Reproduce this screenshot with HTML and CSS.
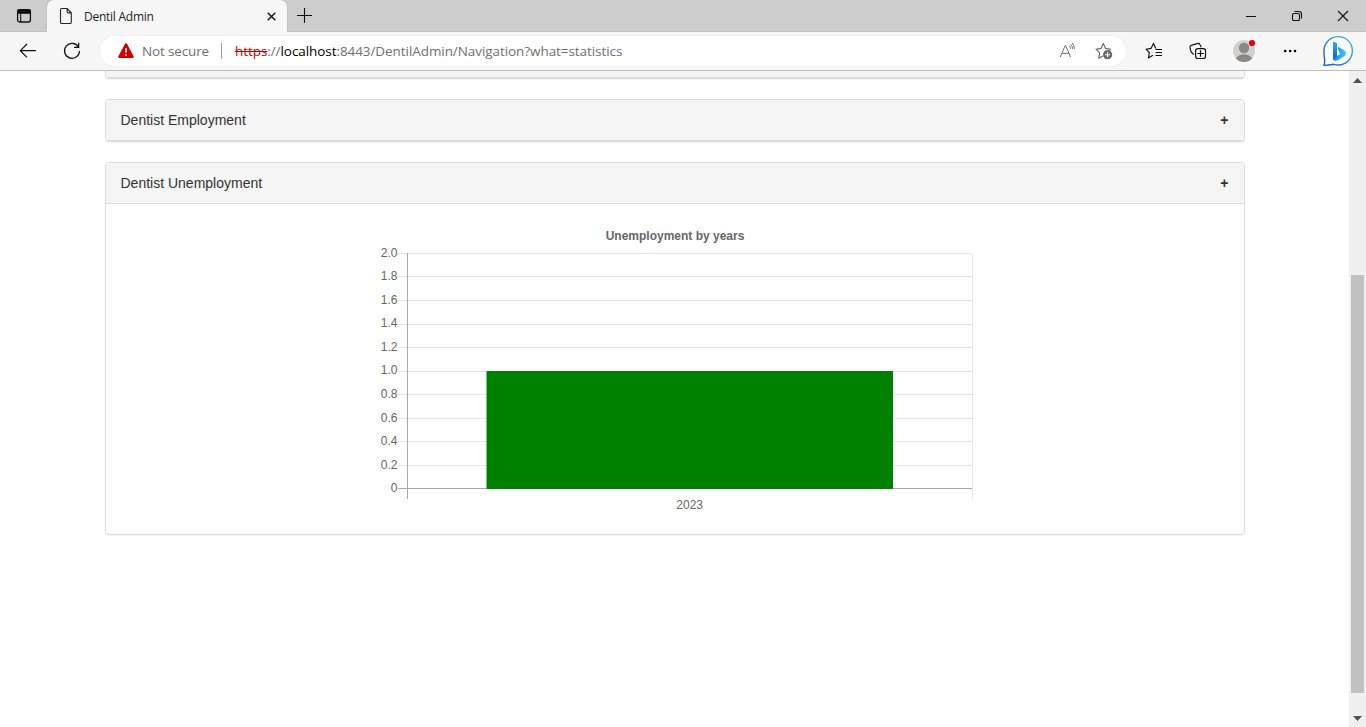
FILE: index.html
```html
<!DOCTYPE html>
<html lang="en">
<head>
<meta charset="utf-8">
<title>Dentil Admin</title>
<link rel="stylesheet" href="styles.css">
</head>
<body>
<div class="browser">
  <div class="tabbar">
    <div class="tab-menu"><svg width="16" height="16" viewBox="0 0 16 16"><rect x="1.6" y="1.6" width="12.8" height="12.4" rx="2" fill="none" stroke="#111" stroke-width="1.3"/><path d="M2 2h12v3.2H2zM4.7 5v9" fill="#111" stroke="#111" stroke-width="1.1"/></svg></div>
    <div class="tab">
      <svg width="14" height="18" viewBox="0 0 14 18"><path d="M2.7 1.5h5.5l4.1 4.3v9.4q0 1.3-1.3 1.3H2.7q-1.2 0-1.2-1.3V2.8q0-1.3 1.2-1.3zM8.2 1.7v3q0 1.2 1.2 1.2h2.8" fill="none" stroke="#222" stroke-width="1.1"/></svg>
      <span class="tab-title">Dentil Admin</span>
      <svg width="9" height="9" viewBox="0 0 9 9"><path d="M.7.7l7.6 7.6M8.3.7L.7 8.3" stroke="#111" stroke-width="1.4"/></svg>
    </div>
    <div class="new-tab"><svg width="15" height="15" viewBox="0 0 15 15"><path d="M7.5 0v15M0 7.5h15" stroke="#111" stroke-width="1.1"/></svg></div>
    <div class="window-buttons">
      <svg width="12" height="12" viewBox="0 0 12 12"><path d="M1 6.5h10" stroke="#111"/></svg>
      <svg width="12" height="12" viewBox="0 0 12 12"><rect x="1.5" y="3.5" width="7" height="7" rx="1.3" fill="none" stroke="#111" stroke-width="1.1"/><path d="M3.5 1.5H8q2.5 0 2.5 2.5v4.5" fill="none" stroke="#111" stroke-width="1.1"/></svg>
      <svg width="12" height="12" viewBox="0 0 12 12"><path d="M1 1l10 10M11 1L1 11" stroke="#111" stroke-width="1.1"/></svg>
    </div>
  </div>
  <div class="toolbar">
    <svg class="back" width="18" height="16" viewBox="0 0 18 16"><path d="M8 1L1.3 7.7 8 14.4M1.5 7.7H17" fill="none" stroke="#111" stroke-width="1.2"/></svg>
    <svg class="reload" width="18" height="18" viewBox="0 0 18 18"><path d="M15.4 4.9A7.5 7.5 0 1 0 16.5 9M15.7.8v4.5h-4.6" fill="none" stroke="#111" stroke-width="1.2"/></svg>
    <div class="address">
      <svg class="warning" width="18" height="16" viewBox="0 0 18 16"><path d="M7.8 1.2q1.2-1.7 2.4 0l6.3 11.9q.8 1.9-1.1 1.9H2.6q-1.9 0-1.1-1.9z" fill="#c00"/><path d="M9 5v4.8M9 11.3v1.6" stroke="#fff" stroke-width="1.4"/></svg>
      <span class="security">Not secure</span>
      <span class="divider"></span>
      <span class="url"><s>https</s>://<b>localhost</b>:8443/DentilAdmin/Navigation?what=statistics</span>
      <svg class="read" width="18" height="18" viewBox="0 0 18 18"><path d="M1.3 15L6.3 3.3h.3L11.5 15M3 11.4h6.8M10 3.6q1.6 1.3 1.6 3.2M11.6 2.2q2 1.8 2 4.7M13.2 1q2.2 2.3 2.2 6" fill="none" stroke="#707070" stroke-width="1"/></svg>
      <svg class="favorite" width="18" height="18" viewBox="0 0 18 18"><path d="M7.8 14l-4 2.2.8-5.3L1 7.2l5-.8 2.3-4.9 2.3 4.9 5.1.8-1.4 1.5" fill="none" stroke="#666" stroke-width="1.1" stroke-linejoin="round"/><circle cx="12.6" cy="12.7" r="4.6" fill="#686868"/><path d="M12.6 10.2v5M10.1 12.7h5" stroke="#fff" stroke-width="1.1"/></svg>
    </div>
    <div class="actions">
      <svg width="18" height="18" viewBox="0 0 18 18"><path d="M7.9 13.3l-4.5 2.7.9-5.3L1 7.2l5-.8 2.5-5 2.3 5.1" fill="none" stroke="#111" stroke-width="1.15" stroke-linejoin="round"/><path d="M10.5 7.5H17M10.5 10.5H17M10.5 13.5H17" stroke="#111" stroke-width="1.15"/></svg>
      <svg width="18" height="18" viewBox="0 0 18 18"><path d="M4.8 12.6L2.7 10.5Q1.9 9.6 1.6 8.4L1 5.2q-.2-1.4 1.2-1.8l6.7-2q1.4-.3 2 1l1.4 2.8" fill="none" stroke="#111" stroke-width="1.15"/><rect x="6.6" y="6.6" width="9.9" height="9.9" rx="2.2" fill="#f7f7f7" stroke="#111" stroke-width="1.2"/><path d="M11.5 8.3v6.4M8.3 11.5h6.5" stroke="#111" stroke-width="1.2"/></svg>
      <svg width="24" height="24" viewBox="0 0 24 24"><defs><clipPath id="avatar"><circle cx="12" cy="12" r="11"/></clipPath></defs><circle cx="12" cy="12" r="11" fill="#d2d0ce"/><g clip-path="url(#avatar)" fill="#8a8683"><circle cx="12" cy="9" r="5.2"/><ellipse cx="12" cy="21.5" rx="8.5" ry="6.2"/></g><circle cx="20" cy="4" r="3.1" fill="#e60000"/></svg>
      <svg width="18" height="18" viewBox="0 0 18 18"><circle cx="4.2" cy="9" r="1.3"/><circle cx="9.1" cy="9" r="1.3"/><circle cx="14" cy="9" r="1.3"/></svg>
      <svg class="bing" width="34" height="34" viewBox="0 0 34 34"><defs><linearGradient id="ring" x1="1" y1="0" x2="0" y2="1"><stop stop-color="#36c5ef"/><stop offset=".5" stop-color="#2487e8"/><stop offset="1" stop-color="#2250cf"/></linearGradient><linearGradient id="stem" x1="0" y1="0" x2="0" y2="1"><stop stop-color="#24aef5"/><stop offset="1" stop-color="#1b4fd9"/></linearGradient><linearGradient id="bowl"><stop stop-color="#1c75e5"/><stop offset="1" stop-color="#39d4ed"/></linearGradient></defs><path d="M3 31.4q.9-2.4.7-5.6Q3 22 3 17.5A14.2 14.2 0 1 1 17.2 31q-2.6 0-4.7-.7Q8 31.2 3 31.4z" fill="#fff" stroke="url(#ring)" stroke-width="1.4" stroke-linejoin="round"/><path d="M12 7.5l3.4 1.3q.6.3.6 1v13.7l-4 2.5z" fill="url(#stem)"/><path d="M17 12.7l6 3.2q2 1.2 2 3.4 0 2.2-2 3.3l-6.5 3.7q-2.3 1.2-4.5-.5v-1.4l7-4.3-2-5z" fill="url(#bowl)"/></svg>
    </div>
  </div>
  <div class="viewport">
    <main class="page">
      <section class="panel clipped"><div class="heading"></div></section>
      <section class="panel"><div class="heading"><span>Dentist Employment</span><strong>+</strong></div></section>
      <section class="panel">
        <div class="heading"><span>Dentist Unemployment</span><strong>+</strong></div>
        <div class="panel-body">
          <svg class="chart" width="600" height="300" viewBox="375 219 600 300">
            <text class="chart-title" x="675" y="240">Unemployment by years</text>
            <path d="M398 253.5H972M398 276.5H972M398 300.5H972M398 324.5H972M398 347.5H972M398 371.5H972M398 394.5H972M398 418.5H972M398 441.5H972M398 465.5H972M972.5 253V499" stroke="#e5e5e5"/>
            <path d="M398 488.5H972M407.5 253V499" stroke="#a8a8a8"/>
            <rect x="486.5" y="371" width="406.5" height="118" fill="green"/>
            <g class="ticks"><text x="397.5" y="257">2.0</text><text x="397.5" y="280">1.8</text><text x="397.5" y="304">1.6</text><text x="397.5" y="327">1.4</text><text x="397.5" y="351">1.2</text><text x="397.5" y="374">1.0</text><text x="397.5" y="398">0.8</text><text x="397.5" y="422">0.6</text><text x="397.5" y="445">0.4</text><text x="397.5" y="469">0.2</text><text x="397.5" y="492">0</text></g>
            <text class="year" x="689.7" y="509">2023</text>
          </svg>
        </div>
      </section>
    </main>
    <div class="scrollbar">
      <svg width="9" height="5" viewBox="0 0 9 5"><path d="M0 5L4.5 0 9 5z" fill="#505050"/></svg>
      <div class="thumb"></div>
      <svg width="9" height="5" viewBox="0 0 9 5"><path d="M0 0l4.5 5L9 0z" fill="#505050"/></svg>
    </div>
  </div>
</div>
</body>
</html>
```
FILE: styles.css
```css
* { box-sizing: border-box; }
body { margin: 0; background: #fff; overflow: hidden; }
svg { display: block; flex: none; }
.browser { width: 1366px; height: 727px; display: flex; flex-direction: column; font-family: "Open Sans", sans-serif; }
.tabbar { height: 32px; flex: none; display: flex; background: #cdcdcd; box-shadow: inset 0 -1px #c2c2c2; }
.tab-menu { width: 47px; padding: 8px 0 0 16px; }
.tab { width: 240px; height: 32px; display: flex; align-items: center; padding: 0 11px 0 12px; background: #f7f7f7; border-radius: 7px 7px 0 0; box-shadow: 0 0 2px #aaa; }
.tab-title { flex: 1; padding-left: 11px; font-size: 12px; letter-spacing: -.25px; color: #222; }
.new-tab { padding: 8px 0 0 10px; }
.window-buttons { margin-left: auto; display: flex; gap: 34px; padding: 10px 17px 0 0; }
.toolbar { height: 39px; flex: none; display: flex; align-items: center; background: #f7f7f7; border-bottom: 1px solid #bdbdbd; }
.back { margin-left: 19px; }
.reload { margin-left: 26px; }
.address { width: 1026px; height: 30px; margin-left: 19px; padding: 0 13px 0 17px; display: flex; align-items: center; border-radius: 15px; background: #fff; box-shadow: 0 0 3px #e6e6e6; font-size: 13.5px; letter-spacing: -.07px; color: #707070; white-space: nowrap; }
.security { width: 72px; margin-left: 7px; letter-spacing: -.15px; }
.divider { width: 1px; height: 16px; margin: 0 13px 0 7px; background: #999; }
.url { flex: 1; }
.url s { color: #c00; }
.url b { color: #000; font-weight: 400; }
.favorite { margin-left: 18px; }
.actions { margin-left: 19px; display: flex; align-items: center; }
.actions svg + svg { margin-left: 26px; }
.actions svg:nth-child(3) { margin-left: 25px; }
.actions svg:nth-child(4) { margin-left: 25px; }
.actions .bing { margin-left: 22px; }
.viewport { flex: 1; min-height: 0; display: flex; overflow: hidden; }
.page { flex: 1; padding: 0 104px 0 105px; font-family: "Liberation Sans", Arial, sans-serif; }
.panel { width: 1140px; margin-bottom: 20px; background: #fff; border: 1px solid #ddd; border-radius: 4px; box-shadow: 0 1px 1px rgba(0,0,0,.05); }
.clipped { height: 43px; margin-top: -35px; }
.heading { height: 41px; padding: 0 15.5px 0 14.5px; display: flex; align-items: center; justify-content: space-between; background: #f5f5f5; border-bottom: 1px solid #ddd; border-radius: 3px 3px 0 0; color: #333; font-size: 14px; }
.panel-body { padding: 15px; display: flex; justify-content: center; }
.chart { font: 12px "Liberation Sans", Arial, sans-serif; fill: #666; }
.chart-title { font-weight: bold; text-anchor: middle; }
.ticks { text-anchor: end; }
.year { text-anchor: middle; }
.scrollbar { width: 17px; background: #f0f0f0; display: flex; flex-direction: column; align-items: center; padding: 7px 0 6px; }
.thumb { width: 13px; height: 418px; margin: 192px 0 auto; background: #c1c1c1; }
```
